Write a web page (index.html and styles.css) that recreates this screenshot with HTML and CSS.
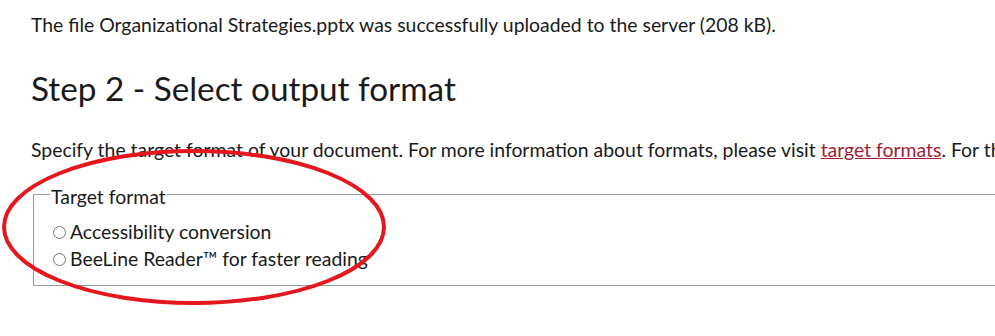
FILE: index.html
```html
<!DOCTYPE html>
<html lang="en">
<head>
  <meta charset="UTF-8">
  <title>Step 2 - Select output format</title>
  <link rel="stylesheet" href="styles.css">
</head>
<body>
  <div class="page">
    <p class="status">The file Organizational Strategies.pptx was successfully uploaded to the server (208 kB).</p>
    <h2>Step 2 - Select output format</h2>
    <p class="intro">Specify the target format of your document. For more information about formats, please visit <a href="#">target formats</a>. For the best results, select the format that suits you.</p>
    <form class="format-form">
      <fieldset>
        <legend>Target format</legend>
        <label><input type="radio" name="target" value="access"> Accessibility conversion</label>
        <label><input type="radio" name="target" value="beeline"> BeeLine Reader™ for faster reading</label>
      </fieldset>
    </form>
    <svg class="highlight" width="400" height="170" viewBox="0 0 400 170">
      <ellipse cx="194" cy="82" rx="190" ry="76" fill="none" stroke="#e3171d" stroke-width="4"/>
    </svg>
  </div>
</body>
</html>
```

FILE: styles.css
```css
html {
  overflow: hidden;
}
body {
  margin: 0;
  min-height: 100vh;
  font-family: Lato, 'Open Sans', sans-serif;
  color: #1a1a1a;
  background: #fff;
}
.page {
  position: relative;
  width: 1600px;
  padding: 11px 0 0 31px;
}
.status {
  margin: 0;
  font-size: 19.4px;
  line-height: 28px;
}
h2 {
  margin: 28px 0 0 0;
  font-size: 33.3px;
  font-weight: 400;
  line-height: 42px;
}
.intro {
  margin: 27px 0 0 0;
  font-size: 19.4px;
  line-height: 28px;
  white-space: nowrap;
}
.intro a {
  color: #a51d34;
}
.format-form {
  margin-top: 16px;
}
fieldset {
  margin: 0 0 0 2px;
  padding: 9px 20px 13px 19px;
  border: 1px solid #999;
  border-right: none;
}
legend {
  padding: 5px 1px 0 1px;
  font-size: 19.4px;
  line-height: 24px;
  margin-left: -3px;
}
fieldset label {
  display: flex;
  align-items: center;
  height: 27px;
  font-size: 19.4px;
  line-height: 27px;
}
fieldset input[type="radio"] {
  margin: 1px 4px 0 0;
  width: 13px;
  height: 13px;
}
.highlight {
  position: absolute;
  left: 0;
  top: 145px;
}
```
